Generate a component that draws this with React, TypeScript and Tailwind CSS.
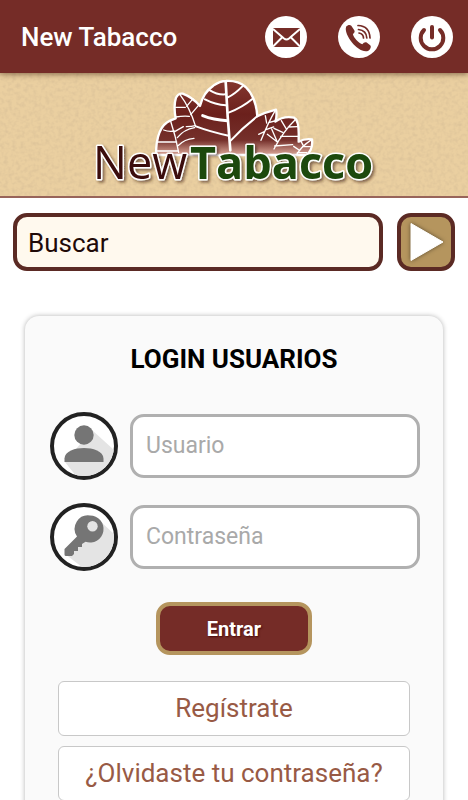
const headerButton = 'flex h-[42px] w-[42px] items-center justify-center rounded-full bg-white'

function MailIcon() {
  return (
    <svg viewBox="0 0 42 42" className="h-[42px] w-[42px]" aria-hidden="true">
      <rect x="8" y="12" width="27" height="19" rx="1" fill="#752c27" />
      <path d="M8 13 19 22.500q2.500 2 5 0L35 13M8 30.500 17 21.500M35 30.500 26 21.500" fill="none" stroke="#fff" strokeWidth="2" />
    </svg>
  )
}

function PhoneIcon() {
  return (
    <svg viewBox="0 0 42 42" className="h-[42px] w-[42px]" aria-hidden="true">
      <path
        d="M8.200 10.500C9.500 9 12 8.200 13.300 9.800L16.300 14.300C17.300 16 16 17.200 14.900 18.200C16 22 20 26.300 24.300 28.300C25.600 26.700 27 25.600 28.700 26.500L32.200 29.200C34 31 31.500 34.800 29 35.200C24 36 18 31.500 14 26.500C10 21.500 6.500 14.500 8.200 10.500Z"
        fill="#752c27"
      />
      <path
        d="M21 17q4.500 1 4.500 5M20.500 13.500q8 1 8.300 8.500M20 9.500Q31.500 10 32 22"
        fill="none"
        stroke="#752c27"
        strokeWidth="1.700"
        strokeLinecap="round"
      />
    </svg>
  )
}

function PowerIcon() {
  return (
    <svg viewBox="0 0 42 42" className="h-[42px] w-[42px]" aria-hidden="true">
      <path d="M13 14a11.300 11.300 0 1 0 16 0" fill="none" stroke="#752c27" strokeWidth="4" strokeLinecap="round" />
      <path d="M21 11v10.500" fill="none" stroke="#752c27" strokeWidth="4" strokeLinecap="round" />
    </svg>
  )
}

function Linen() {
  return (
    <svg className="absolute inset-0 h-full w-full" aria-hidden="true">
      <filter id="linen" x="0" y="0" width="100%" height="100%">
        <feTurbulence type="fractalNoise" baseFrequency="0.24 0.26" numOctaves="2" seed="4" />
        <feColorMatrix values="0 0 0 0 0.66  0 0 0 0 0.5  0 0 0 0 0.3  1.2 0 0 0 -0.48" />
      </filter>
      <rect width="100%" height="100%" filter="url(#linen)" />
    </svg>
  )
}

function Logo() {
  return (
    <svg viewBox="80 73 308 123" className="relative h-[123px] w-[308px]" role="img" aria-label="NewTabacco">
      <defs>
        <linearGradient id="leaf" x1="0" y1="0" x2="0" y2="1">
          <stop offset="0" stopColor="#84372f" />
          <stop offset="0.45" stopColor="#6b201c" />
          <stop offset="0.8" stopColor="#75302b" />
          <stop offset="1" stopColor="#dda99a" />
        </linearGradient>
        <filter id="shade" x="-10%" y="-20%" width="120%" height="150%">
          <feDropShadow dx="2" dy="2" stdDeviation="1.5" floodColor="#3a2410" floodOpacity="0.6" />
        </filter>
      </defs>
      <g transform="translate(150 73) scale(.3333)" fill="none" stroke="#fff" strokeLinejoin="round" strokeLinecap="round">
        <path
          d="M18 246Q18 160 62 142L77 136Q70 98 78 74Q85 60 98 62Q126 72 150 99Q160 58 190 38Q210 24 228 24Q264 22 287 42Q318 72 322 130Q346 118 378 110Q382 128 376 146Q400 128 432 134Q448 142 446 194L446 206Q464 196 486 199Q490 228 470 246Z"
          fill="url(#leaf)"
          strokeWidth="7"
        />
        {/* centre leaf */}
        <path d="M227 26Q232 130 241 232" strokeWidth="8" />
        <path d="M158 128Q190 141 232 143" strokeWidth="9" />
        <path d="M180 52Q202 66 226 64M165 79Q196 95 228 97M138 160Q180 176 236 188M232 74Q256 62 277 40M236 119Q277 103 307 78M242 203Q278 164 322 130" strokeWidth="6" />
        {/* left leaves */}
        <path d="M90 65Q120 105 136 158M77 103H106M77 132Q100 128 118 130M110 100L129 77M122 125L145 98M62 145Q77 190 86 238M41 171Q56 177 73 174M24 207H80M20 234H84M74 176L100 161M82 194Q102 169 134 164M84 218Q104 198 132 196" strokeWidth="4" />
        <path d="M136 158Q125 161 109 161" strokeWidth="4" />
        {/* right leaves */}
        <path d="M376 112Q354 150 333 202M350 150L346 128M343 176L326 184M356 149L374 144M348 170L371 162M438 138Q400 174 372 228M408 166L394 143M415 162L443 161M398 178L372 166M392 190L444 190M382 207L352 184M374 219L428 215M365 168L382 207M482 202Q454 220 438 248M460 218L453 205M458 220L481 221M447 231L431 220M442 239H470" strokeWidth="4" />
      </g>
      <g filter="url(#shade)" stroke="#fff" strokeWidth="3" strokeLinejoin="round" paintOrder="stroke" fontSize="45" fontFamily="'Open Sans', 'Noto Sans', sans-serif">
        <text x="93" y="179" fill="#3b0808">
          New
        </text>
        <text x="190" y="179" fill="#1d4a0c" fontWeight="700">
          Tabacco
        </text>
      </g>
    </svg>
  )
}

function UserIcon() {
  return (
    <svg viewBox="0 0 60 60" className="h-full w-full" aria-hidden="true">
      <path d="M38 14 60 34V60H22L11 46Z" fill="#e4e4e4" />
      <circle cx="30" cy="19" r="9.700" fill="#757575" />
      <path d="M10.500 46V42.500C10.500 35 21.500 32 30 32S49.500 35 49.500 42.500V46Z" fill="#757575" />
    </svg>
  )
}

function KeyIcon() {
  return (
    <svg viewBox="0 0 60 60" className="h-full w-full" aria-hidden="true">
      <path d="M46 14 60 27V60H28L11 47Z" fill="#e4e4e4" />
      <path
        d="M36 8.500A13.500 13.500 0 1 1 31.500 34.700L28 37V40H24V44H20V47L18 49H12Q10.500 49 10.500 47.500V42L23 29.500A13.500 13.500 0 0 1 36 8.500Z"
        fill="#757575"
      />
      <circle cx="38.500" cy="19.200" r="5.200" fill="#e4e4e4" />
    </svg>
  )
}

const fieldRow = 'flex items-center gap-3 pl-[2px]'
const fieldIcon = 'h-[68px] w-[68px] shrink-0 overflow-hidden rounded-full border-4 border-[#222] bg-white'
const fieldInput =
  'h-16 min-w-0 flex-1 rounded-[14px] border-[3px] border-[#b0b0b0] bg-white px-[13px] pb-[2px] text-[23px] text-[#333] outline-none placeholder:text-[#a9a9a9]'
const linkButton =
  'flex h-[55px] items-center justify-center rounded-md border border-[#c8c8c8] bg-white text-[26px] text-[#985a45]'

export default function App() {
  return (
    <div className="min-h-screen bg-white font-['Roboto',sans-serif]">
      <header className="relative z-10 flex h-[73px] items-center justify-between bg-[#752c27] pr-[15px] pl-[21px] shadow-[0_1px_6px_rgba(60,30,10,0.6)]">
        <h1 className="pt-[2px] text-[26px] font-medium text-white">New Tabacco</h1>
        <nav className="flex gap-[31px]">
          <a href="#mensaje" aria-label="Mensaje" className={headerButton}>
            <MailIcon />
          </a>
          <a href="#llamar" aria-label="Llamar" className={headerButton}>
            <PhoneIcon />
          </a>
          <button type="button" aria-label="Salir" className={headerButton}>
            <PowerIcon />
          </button>
        </nav>
      </header>

      <div className="relative flex justify-center border-b-2 border-[#98645a] bg-[#eacfa0]">
        <Linen />
        <Logo />
      </div>

      <main>
        <form className="flex gap-[14px] px-[13px] pt-[15px]">
          <input
            type="text"
            aria-label="Buscar"
            placeholder="Buscar"
            className="h-[58px] min-w-0 flex-1 rounded-[14px] border-4 border-[#5b2a24] bg-[#fff9ee] px-[11px] pt-[2px] text-[26px] text-[#1f0a08] outline-none placeholder:text-[#1f0a08]"
          />
          <button
            type="submit"
            aria-label="Ir"
            className="flex h-[58px] w-[58px] items-center justify-center rounded-[14px] border-4 border-[#5b2a24] bg-[#b5955e]"
          >
            <svg viewBox="0 0 50 50" className="h-[50px] w-[50px] drop-shadow-[0_0_2px_rgba(0,0,0,0.5)]" aria-hidden="true">
              <path d="M10 6.500v37l32-18.500z" fill="#fff" stroke="#fff" strokeLinejoin="round" />
            </svg>
          </button>
        </form>

        <section className="mx-[25px] mt-[45px] rounded-[14px] bg-[#fafafa] px-[23px] pb-8 shadow-[0_0_5px_rgba(0,0,0,0.3)]">
          <h2 className="pt-6 text-center text-[26px] leading-[38px] font-bold text-black">LOGIN USUARIOS</h2>
          <form className="mt-[34px] flex flex-col gap-[23px]">
            <div className={fieldRow}>
              <span className={fieldIcon}>
                <UserIcon />
              </span>
              <input type="text" aria-label="Usuario" placeholder="Usuario" className={fieldInput} />
            </div>
            <div className={fieldRow}>
              <span className={fieldIcon}>
                <KeyIcon />
              </span>
              <input type="password" aria-label="Contraseña" placeholder="Contraseña" className={fieldInput} />
            </div>
            <button
              type="submit"
              className="mt-2 h-[53px] w-[156px] self-center rounded-[14px] border-4 border-[#b5955e] bg-[#752c27] text-xl font-bold text-white [text-shadow:1px_1px_2px_rgba(60,0,0,0.8)]"
            >
              Entrar
            </button>
          </form>
          <div className="mx-[10px] mt-[26px] flex flex-col gap-[10px]">
            <a href="#registro" className={linkButton}>
              Regístrate
            </a>
            <a href="#recuperar" className={linkButton}>
              ¿Olvidaste tu contraseña?
            </a>
          </div>
        </section>
      </main>
    </div>
  )
}
